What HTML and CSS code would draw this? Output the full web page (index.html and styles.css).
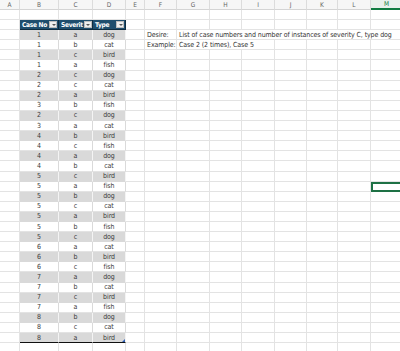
FILE: index.html
```html
<!DOCTYPE html>
<html lang="en">
<head>
    <meta charset="UTF-8">
    <meta name="viewport" content="width=device-width, initial-scale=1.0">
    <title>Cases</title>
    <link rel="stylesheet" href="styles.css">
</head>
<body>
    <div class="sheet" id="sheet"></div>
    <script>
        let letters = ['A', 'B', 'C', 'D', 'E', 'F', 'G', 'H', 'I', 'J', 'K', 'L', 'M'];
        let cases = [
            [1, 'a', 'dog'], [1, 'b', 'cat'], [1, 'c', 'bird'], [1, 'a', 'fish'],
            [2, 'c', 'dog'], [2, 'c', 'cat'], [2, 'a', 'bird'], [3, 'b', 'fish'],
            [2, 'c', 'dog'], [3, 'a', 'cat'], [4, 'b', 'bird'], [4, 'c', 'fish'],
            [4, 'a', 'dog'], [4, 'b', 'cat'], [5, 'c', 'bird'], [5, 'a', 'fish'],
            [5, 'b', 'dog'], [5, 'c', 'cat'], [5, 'a', 'bird'], [5, 'b', 'fish'],
            [5, 'c', 'dog'], [6, 'a', 'cat'], [6, 'b', 'bird'], [6, 'c', 'fish'],
            [7, 'a', 'dog'], [7, 'b', 'cat'], [7, 'c', 'bird'], [7, 'a', 'fish'],
            [8, 'b', 'dog'], [8, 'c', 'cat'], [8, 'a', 'bird']
        ];
        let headers = ['Case No', 'Severit', 'Type'];
        let sheet = document.getElementById('sheet');

        function addCell(cls, text, span) {
            let div = document.createElement('div');
            div.className = 'cell ' + cls;
            if (span) div.style.gridColumn = 'span ' + span;
            if (text !== undefined) {
                let s = document.createElement('span');
                s.className = 'txt';
                s.textContent = text;
                div.appendChild(s);
            }
            sheet.appendChild(div);
            return div;
        }

        letters.forEach(l => addCell(l === 'M' ? 'colhead active' : 'colhead', l));

        for (let r = 1; r <= 34; r++) {
            for (let c = 0; c < letters.length; c++) {
                let col = letters[c];
                let i = r - 3;
                if (r === 2 && c >= 1 && c <= 3) {
                    let th = addCell('th', headers[c - 1]);
                    let btn = document.createElement('span');
                    btn.className = 'filter';
                    th.appendChild(btn);
                } else if (i >= 0 && i < cases.length && c >= 1 && c <= 3) {
                    let cls = 'td' + (i % 2 === 0 ? ' band' : '');
                    if (i === cases.length - 1) cls += ' last';
                    if (c === 3) cls += ' right';
                    addCell(cls, cases[i][c - 1]);
                } else if (r === 3 && col === 'F') {
                    addCell('note', 'Desire:');
                } else if (r === 3 && col === 'G') {
                    addCell('note', 'List of case numbers and number of instances of severity C, type dog', 7);
                    c += 6;
                } else if (r === 4 && col === 'F') {
                    addCell('note', 'Example:');
                } else if (r === 4 && col === 'G') {
                    addCell('note', 'Case 2 (2 times), Case 5', 3);
                    c += 2;
                } else if (r === 18 && col === 'M') {
                    addCell('selected');
                } else {
                    addCell('blank');
                }
            }
        }
    </script>
</body>
</html>
```

FILE: styles.css
```css
body {
    margin: 0;
    background-color: #fff;
    overflow: hidden;
    font-family: "Liberation Sans Narrow", "DejaVu Sans Condensed", "Liberation Sans", sans-serif;
    font-size: 7px;
    letter-spacing: -0.1px;
    color: #333;
}
.sheet {
    display: grid;
    grid-template-columns: 20px 39px 34px 33px 19px 32px 33px 32px 33px 32px 31px 33px 32px;
    grid-template-rows: 10px repeat(34, 10.1px);
    width: 403px;
}
.cell {
    box-sizing: border-box;
    display: flex;
    align-items: center;
    border-right: 1px solid #e3e3e3;
    border-bottom: 1px solid #e3e3e3;
    padding: 0 2px;
    white-space: nowrap;
    overflow: hidden;
    position: relative;
}
.colhead {
    justify-content: center;
    background-color: #f6f6f6;
    border-right-color: #dcdcdc;
    border-bottom-color: #d4d4d4;
    color: #666;
    font-size: 6.5px;
    letter-spacing: 0;
}
.colhead.active {
    color: #107c41;
    background-color: #e9f1ec;
    border-bottom: 2px solid #107c41;
}
.th {
    background-color: #1f4e6e;
    color: #fff;
    font-weight: bold;
    font-size: 6.6px;
    letter-spacing: -0.3px;
    border-right: 1px solid #0f2c40;
    border-bottom: 1px solid #0f2c40;
    justify-content: space-between;
    padding: 0 1px 0 2px;
}
.filter {
    flex: none;
    width: 8px;
    height: 7px;
    margin-left: 1px;
    background-color: #eeeeee;
    border: 1px solid #bdbdbd;
    box-sizing: border-box;
    position: relative;
}
.filter::after {
    content: "";
    position: absolute;
    left: 1.5px;
    top: 2px;
    border-left: 2px solid transparent;
    border-right: 2px solid transparent;
    border-top: 2px solid #555;
}
.td {
    justify-content: center;
    background-color: #fff;
    border-right-color: #dadada;
    border-bottom-color: #e3e3e3;
    color: #3a3a3a;
}
.td.band {
    background-color: #d9d9d9;
    border-right-color: #f4f4f4;
    border-bottom-color: #d9d9d9;
}
.td.last {
    border-bottom: 1.5px solid #111;
}
.td.last.right::after {
    content: "";
    position: absolute;
    right: 0;
    bottom: 0;
    border-left: 3px solid transparent;
    border-bottom: 3px solid #2f5fb3;
}
.note {
    color: #333;
}
.selected {
    border: 2px solid #1e7145;
}
```
